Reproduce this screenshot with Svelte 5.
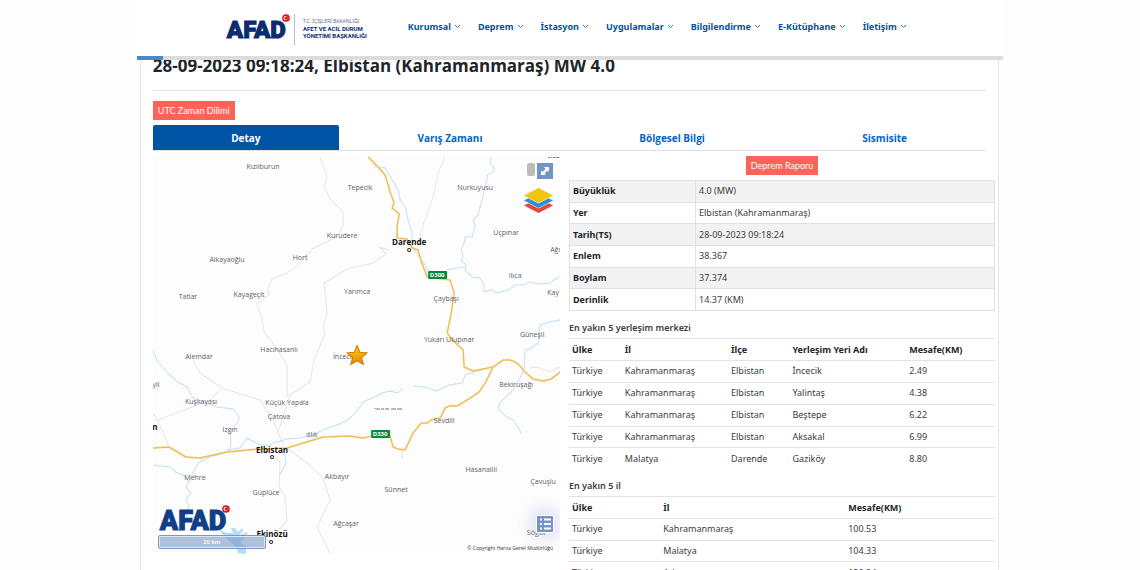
<script lang="ts">
  let activeTab = $state('Detay');

  const menu = ['Kurumsal', 'Deprem', 'İstasyon', 'Uygulamalar', 'Bilgilendirme', 'E-Kütüphane', 'İletişim'];

  const tabs = [
    { name: 'Detay', grow: 186 },
    { name: 'Varış Zamanı', grow: 222 },
    { name: 'Bölgesel Bilgi', grow: 222 },
    { name: 'Sismisite', grow: 203 }
  ];

  const details = [
    ['Büyüklük', '4.0 (MW)'],
    ['Yer', 'Elbistan (Kahramanmaraş)'],
    ['Tarih(TS)', '28-09-2023 09:18:24'],
    ['Enlem', '38.367'],
    ['Boylam', '37.374'],
    ['Derinlik', '14.37 (KM)']
  ];

  const settlements = [
    ['Türkiye', 'Kahramanmaraş', 'Elbistan', 'İncecik', '2.49'],
    ['Türkiye', 'Kahramanmaraş', 'Elbistan', 'Yalintaş', '4.38'],
    ['Türkiye', 'Kahramanmaraş', 'Elbistan', 'Beştepe', '6.22'],
    ['Türkiye', 'Kahramanmaraş', 'Elbistan', 'Aksakal', '6.99'],
    ['Türkiye', 'Malatya', 'Darende', 'Gaziköy', '8.80']
  ];

  const provinces = [
    ['Türkiye', 'Kahramanmaraş', '100.53'],
    ['Türkiye', 'Malatya', '104.33'],
    ['Türkiye', 'Adıyaman', '120.94']
  ];

  // village labels, x is the middle of the text
  const villages = [
    { name: 'Kızılburun', x: 263, y: 169 },
    { name: 'Tepecik', x: 360, y: 190 },
    { name: 'Nurkuyusu', x: 475, y: 190 },
    { name: 'Kurudere', x: 342, y: 238 },
    { name: 'Üçpınar', x: 506, y: 235 },
    { name: 'Ağı', x: 555, y: 252 },
    { name: 'Alkayaoğlu', x: 227, y: 262 },
    { name: 'Hort', x: 300, y: 260 },
    { name: 'Ilıca', x: 515, y: 278 },
    { name: 'Tatlar', x: 188, y: 299 },
    { name: 'Kayageçit', x: 249, y: 297 },
    { name: 'Yarımca', x: 357, y: 294 },
    { name: 'Çaybaşı', x: 446, y: 301 },
    { name: 'Kay', x: 553, y: 295 },
    { name: 'Yukarı Ulupınar', x: 449, y: 342 },
    { name: 'Güneşli', x: 532, y: 337 },
    { name: 'Alemdar', x: 199, y: 359 },
    { name: 'Hacıhasanlı', x: 279, y: 352 },
    { name: 'İncecik', x: 344, y: 359 },
    { name: 'yli', x: 156, y: 387 },
    { name: 'Bekiruşağı', x: 516, y: 387 },
    { name: 'Kuşkayası', x: 201, y: 404 },
    { name: 'Küçük Yapala', x: 287, y: 405 },
    { name: 'Çatova', x: 279, y: 419 },
    { name: 'Sevdili', x: 444, y: 423 },
    { name: 'Izgın', x: 230, y: 432 },
    { name: 'ıtlık', x: 312, y: 437 },
    { name: 'Mehre', x: 195, y: 480 },
    { name: 'Akbayır', x: 337, y: 479 },
    { name: 'Hasanalili', x: 481, y: 472 },
    { name: 'Çavuşlu', x: 543, y: 484 },
    { name: 'Güplüce', x: 266, y: 495 },
    { name: 'Sünnet', x: 396, y: 492 },
    { name: 'Ağcaşar', x: 346, y: 526 },
    { name: 'Söğüt', x: 536, y: 535 }
  ];

  const towns = [
    { name: 'Darende', x: 409, y: 245 },
    { name: 'Elbistan', x: 272, y: 453 },
    { name: 'Ekinözü', x: 272, y: 537 },
    { name: 'n', x: 155, y: 430 }
  ];

  const townDots = [
    [409, 250],
    [272, 457],
    [271, 542]
  ];

  const paths = [
    '320,157 327,177 324,187 330,199 343,212 343,225 337,237 312,249 297,266 287,273 272,279 267,292 270,294 257,304 262,318 264,332 275,347 284,360 287,367 287,397',
    '389,250 379,247 386,254 373,263 360,266 347,269 324,283 327,313 323,328 325,333 314,360 310,382 290,395 278,432',
    '445,157 438,173 433,197 422,228 420,236',
    '193,360 200,373 222,388 260,400 273,420 283,445 307,463 323,478 330,500 317,527 330,553',
    '158,420 210,400 221,389',
    '153,413 160,425 169,447',
    '275,457 280,462 279,487 285,497 287,520 277,532',
    '530,368 537,367 550,372 559,367',
    '402,450 402,458'
  ];

  const rivers = [
    '372,160 375,167 385,168 392,180 398,190 400,200 405,207 408,220 412,233 412,247 425,265 430,273',
    '491,157 490,163 494,168 493,172 487,175 487,179 485,186 482,200 480,207 478,215 473,220 475,226 472,237 465,237 464,243 461,250 463,256 461,261 466,265 465,270 472,277 480,278 484,285 484,292 490,290 498,293 510,289 515,285 523,285 530,282 538,284 550,283 554,280 559,277',
    '447,270 457,268 465,267',
    '560,320 549,322 540,325 539,330 538,343 530,349 525,350 524,370 513,390 500,402 498,408 504,415 513,420 521,433',
    '413,386 424,387 437,391 449,385 462,383 465,375 478,371 493,367',
    '403,388 398,393 390,391 382,393 375,397 370,399 363,402 360,407 355,413 346,421 337,425 325,429 313,435 300,438 287,439 273,443 270,445 260,445 247,438 240,448 227,450',
    '153,350 157,361 167,372 178,382 187,387 193,398 205,403 217,407 233,409 238,415 239,420 234,427 230,433 231,441 230,450 221,454 210,457 198,463 192,475 190,480 186,487 191,493 186,500 189,507 185,513 189,520',
    '153,465 170,467 177,473 183,475 189,482',
    '280,450 285,456 286,463 280,475'
  ];

  const roads = [
    '368,157 377,166 385,175 390,192 394,203 392,208 399,214 397,227 397,238 407,239 412,248 418,250 421,261 427,277 450,280 454,293 451,314 447,333 453,341 463,350 464,367 473,371 493,367',
    '153,448 169,447 186,457 200,458 227,452 257,449 287,448 323,437 350,436 363,438 372,436 390,436 393,447 398,449 405,450 413,433 421,423 427,423 431,420 440,418 445,408 449,406 457,406 470,398 479,392 485,383 493,367 503,360 510,360 517,363 525,372 533,379 543,381 551,379 560,372'
  ];
</script>

{#snippet crescent()}
  <svg class="flag" viewBox="0 0 10 10" aria-hidden="true">
    <circle cx="5" cy="5" r="4.8" fill="#e3121c" />
    <circle cx="4.4" cy="5" r="2.4" fill="#fff" />
    <circle cx="5.2" cy="5" r="1.9" fill="#e3121c" />
    <path d="M7.8 4 7.5 4.8 6.7 5 7.5 5.3 7.8 6.1 7.9 5.2z" fill="#fff" />
  </svg>
{/snippet}

<div class="page">
  <header>
    <div class="topBar">
      <a class="brand" href="#anasayfa">
        <span class="afad">AFAD{@render crescent()}</span>
        <span class="ministry">
          <small>T.C. İÇİŞLERİ BAKANLIĞI</small>
          <span>AFET VE ACİL DURUM</span>
          <span>YÖNETİMİ BAŞKANLIĞI</span>
        </span>
      </a>
      <nav>
        {#each menu as item}
          <a href="#menu">
            {item}
            <svg viewBox="0 0 7 5" aria-hidden="true"><path d="M1 1l2.5 2.5L6 1" /></svg>
          </a>
        {/each}
      </nav>
    </div>
    <div class="scrollTrack"><div class="scrollBar"></div></div>
  </header>

  <main>
    <h1>28-09-2023 09:18:24, Elbistan (Kahramanmaraş) MW 4.0</h1>
    <button class="danger">UTC Zaman Dilimi</button>

    <div class="tabs" role="tablist">
      {#each tabs as tab}
        <button
          role="tab"
          aria-selected={activeTab === tab.name}
          class:active={activeTab === tab.name}
          style="flex-grow: {tab.grow}"
          onclick={() => (activeTab = tab.name)}>{tab.name}</button
        >
      {/each}
    </div>

    <div class="columns">
      <section class="map">
        <svg class="tiles" viewBox="153 156 407 398" preserveAspectRatio="xMidYMid slice">
          {#each paths as points}
            <polyline class="path" {points} />
          {/each}
          {#each rivers as points}
            <polyline class="river" {points} />
          {/each}
          <path
            class="lake"
            d="M218 529l9 4 6 0-2-5 4 0 3 4 4-4 1 3-4 4 9-3-5 8-4 2 7 4 0 8-8-1-2-6-8-7-5-5z"
          />
          {#each roads as points}
            <polyline class="roadEdge" {points} />
            <polyline class="road" {points} />
          {/each}

          {#each villages as village}
            <text class="village" x={village.x} y={village.y}>{village.name}</text>
          {/each}
          {#each towns as town}
            <text class="town" x={town.x} y={town.y}>{town.name}</text>
          {/each}
          {#each townDots as [x, y]}
            <circle class="dot" cx={x} cy={y} r="1.5" />
          {/each}

          <rect class="shield" x="428" y="271" width="19" height="8" rx="1" />
          <text class="route" x="437" y="277">D300</text>
          <rect class="shield" x="371" y="430" width="19" height="8" rx="1" />
          <text class="route" x="380" y="436">D330</text>

          <!-- labels cut by the tile edges -->
          <path class="cut" d="M548 157.500h2m1 0h1m1 0h2m1 0h3M375 408v1m1 0h4m1 0h3m1 0h4m2 0h5m1 0h5" />

          <defs>
            <linearGradient id="gold" x1="0" y1="0" x2="0" y2="1">
              <stop offset="0" stop-color="#ffcb1c" />
              <stop offset="1" stop-color="#e38700" />
            </linearGradient>
          </defs>
          <path
            class="star"
            fill="url(#gold)"
            d="M357 345.500l2.800 6.700 7.200.6-5.500 4.700 1.800 7-6.300-3.800-6.300 3.800 1.800-7-5.500-4.700 7.200-.6z"
          />
        </svg>

        <div class="mapTools">
          <span class="handle"></span>
          <button class="expand" aria-label="Tam ekran">
            <svg viewBox="0 0 16 16"><path d="M12 4v5L10.500 7.500 7.500 10.500 9 12H4V7.500L5.500 9 8.500 6 7 4z" /></svg>
          </button>
          <button class="layers" aria-label="Katmanlar">
            <svg viewBox="0 0 29 26">
              <path fill="#e8483c" d="M14.500 10 29 17.500 14.500 25 0 17.500z" />
              <path fill="#fff" d="M14.500 5.500 29 13 14.500 20.500 0 13z" />
              <path fill="#2f8fd8" d="M14.500 5 29 12.500 14.500 20 0 12.500z" />
              <path fill="#fff" d="M14.500 0 29 8 14.500 15.500 0 8z" />
              <path fill="#f1c40f" d="M14.500 0 29 7.500 14.500 15 0 7.500z" />
            </svg>
          </button>
        </div>

        <div class="mapLogo">
          <span class="afad">AFAD{@render crescent()}</span>
          <div class="scale">20 km</div>
        </div>

        <div class="legend">
          <button aria-label="Lejant">
            <svg viewBox="0 0 16 16">
              <path d="M3 3.500h2M3 8h2M3 12.500h2M7 3.500h7M7 8h7M7 12.500h7" />
            </svg>
          </button>
          <small>© Copyright Harita Genel Müdürlüğü</small>
        </div>
      </section>

      <section class="info">
        <button class="danger report">Deprem Raporu</button>

        <table class="details">
          <tbody>
            {#each details as [label, value]}
              <tr>
                <th scope="row">{label}</th>
                <td>{value}</td>
              </tr>
            {/each}
          </tbody>
        </table>

        <h2>En yakın 5 yerleşim merkezi</h2>
        <table class="list settlements">
          <thead>
            <tr>
              <th>Ülke</th>
              <th>İl</th>
              <th>İlçe</th>
              <th>Yerleşim Yeri Adı</th>
              <th>Mesafe(KM)</th>
            </tr>
          </thead>
          <tbody>
            {#each settlements as row}
              <tr>
                {#each row as cell}<td>{cell}</td>{/each}
              </tr>
            {/each}
          </tbody>
        </table>

        <h2>En yakın 5 il</h2>
        <table class="list provinces">
          <thead>
            <tr>
              <th>Ülke</th>
              <th>İl</th>
              <th>Mesafe(KM)</th>
            </tr>
          </thead>
          <tbody>
            {#each provinces as row}
              <tr>
                {#each row as cell}<td>{cell}</td>{/each}
              </tr>
            {/each}
          </tbody>
        </table>
      </section>
    </div>
  </main>
</div>

<style>
  :global(body) {
    background: #fefefe;
  }

  .page {
    width: 76%;
    height: 100vh;
    margin: 0 auto;
    overflow: hidden;
    font-family: 'Open Sans', 'Noto Sans', sans-serif;
    font-size: 10px;
    color: #3a3d40;
  }

  button {
    font: inherit;
    border: none;
    padding: 0;
    cursor: pointer;
  }

  a {
    text-decoration: none;
  }

  header {
    position: relative;
    z-index: 1;
    background: white;
  }

  .topBar {
    display: flex;
    align-items: center;
    height: 53px;
    padding: 0 0 3px 90px;
  }

  .brand {
    display: flex;
    align-items: center;
    width: 181px;
    padding-top: 6px;
    color: #0b2c6f;
  }

  .afad {
    position: relative;
    font-family: Roboto, sans-serif;
    font-size: 24px;
    line-height: 24px;
    font-weight: 900;
    color: #0b2c6f;
    -webkit-text-stroke: 1px currentColor;
  }

  .flag {
    position: absolute;
    top: -4px;
    right: -4px;
    width: 8px;
    height: 8px;
  }

  .ministry {
    display: flex;
    flex-direction: column;
    margin-left: 8px;
    padding: 4px 0 6px 8px;
    border-left: 1px solid #b8bfd0;
    font-family: Roboto, sans-serif;
    font-size: 6px;
    line-height: 7px;
    font-weight: 700;
    white-space: nowrap;
  }

  .ministry small {
    font-family: 'Noto Sans', sans-serif;
    font-size: 5px;
    font-weight: 400;
    color: #5d6c95;
  }

  nav {
    display: flex;
    gap: 17px;
    font-family: 'Noto Sans', sans-serif;
    font-size: 9px;
    white-space: nowrap;
  }

  nav a {
    display: flex;
    align-items: center;
    gap: 3px;
    color: #0054a6;
    font-weight: 700;
  }

  nav svg {
    width: 7px;
    height: 5px;
    fill: none;
    stroke: #3c78b8;
  }

  .scrollTrack {
    height: 4px;
    background: #dcdcdc;
  }

  .scrollBar {
    width: 3%;
    height: 4px;
    background: #4a89c8;
  }

  main {
    margin: 0 4px 0 3px;
    padding: 0 3px 0 12px;
    border: 1px solid #e4e5ec;
    border-width: 0 1px;
    background: white;
  }

  h1 {
    margin: -6px 9px 10px 0;
    padding-bottom: 12px;
    border-bottom: 1px solid #e3e4e6;
    font-size: 17px;
    line-height: 24px;
    font-weight: 700;
    color: #212529;
    white-space: nowrap;
  }

  .danger {
    height: 19px;
    padding: 0 5px;
    background: #ff6258;
    color: white;
    font-family: Lato, sans-serif;
    font-size: 9px;
  }

  main > .danger {
    display: block;
  }

  .tabs {
    display: flex;
    margin: 5px 9px 5px 0;
    border-bottom: 1px solid #dee2e6;
  }

  .tabs button {
    flex-basis: 0;
    height: 25px;
    background: transparent;
    color: #0066c8;
    font-weight: 700;
  }

  .tabs .active {
    background: #0054a6;
    border-radius: 2px 2px 0 0;
    color: white;
  }

  .columns {
    display: grid;
    grid-template-columns: 407fr 426fr;
    gap: 9px;
    align-items: start;
  }

  .map {
    position: relative;
    height: 398px;
    overflow: hidden;
    background: #fdfdfd;
  }

  .tiles {
    display: block;
    width: 100%;
    height: 100%;
  }

  .path,
  .river,
  .road,
  .roadEdge {
    fill: none;
    stroke-linejoin: round;
  }

  .path {
    stroke: #e6e6e6;
  }

  .river {
    stroke: #c3e0f5;
  }

  .lake {
    fill: #b5dcf7;
  }

  .roadEdge {
    stroke: #f6dfa8;
    stroke-width: 2;
  }

  .road {
    stroke: #edb84e;
    stroke-width: 1;
  }

  .village,
  .town,
  .route {
    text-anchor: middle;
    font-size: 7px;
  }

  .village {
    fill: #5e5e68;
  }

  .town {
    font-size: 8px;
    font-weight: 700;
    fill: #111;
  }

  .route {
    font-size: 6px;
    font-weight: 700;
    fill: white;
  }

  .dot {
    fill: white;
    stroke: #222;
  }

  .shield {
    fill: #078a3c;
  }

  .cut {
    stroke: #777;
  }

  .star {
    stroke: #c87c08;
  }

  .mapTools {
    position: absolute;
    top: 7px;
    right: 7px;
    display: flex;
    flex-wrap: wrap;
    justify-content: flex-end;
    gap: 9px 2px;
    width: 30px;
  }

  .handle {
    width: 8px;
    height: 13px;
    border-radius: 2px;
    background: #bcbcbc;
  }

  .expand,
  .legend button {
    width: 16px;
    height: 16px;
    background: #7394c4;
  }

  .expand svg,
  .layers svg,
  .legend svg {
    display: block;
  }

  .expand path {
    fill: white;
  }

  .layers {
    width: 29px;
    height: 26px;
    background: transparent;
  }

  .mapLogo {
    position: absolute;
    left: 5px;
    bottom: 5px;
    width: 108px;
  }

  .mapLogo .afad {
    display: inline-block;
    margin-left: 2px;
    font-size: 27px;
    color: #0f3f87;
  }

  .scale {
    margin-top: 2px;
    border: 1px solid #7b98c4;
    outline: 1px solid #dfe6f1;
    outline-offset: -2px;
    border-radius: 2px;
    background: #7b98c499;
    color: white;
    font-size: 6px;
    line-height: 12px;
    font-weight: 600;
    text-align: center;
  }

  .legend {
    position: absolute;
    right: 7px;
    bottom: 2px;
    display: flex;
    flex-direction: column;
    align-items: flex-end;
    gap: 12px;
    line-height: 8px;
  }

  .legend button {
    box-shadow: 0 0 0 1px white, 0 0 16px 6px #b4bae066;
  }

  .legend path {
    stroke: white;
    stroke-width: 2;
  }

  .legend small {
    font-size: 5px;
    color: #333;
  }

  .info {
    display: flex;
    flex-direction: column;
  }

  .report {
    align-self: center;
    margin-bottom: 5px;
  }

  table {
    width: 100%;
    border-collapse: collapse;
    table-layout: fixed;
    font-family: 'Noto Sans', sans-serif;
    font-size: 9px;
    line-height: 14px;
  }

  th,
  td {
    padding: 0 3px;
    text-align: left;
    white-space: nowrap;
  }

  th {
    color: #212529;
    font-weight: 700;
  }

  .details,
  .settlements {
    height: 131px;
  }

  .provinces {
    height: 87px;
  }

  thead tr {
    height: 22px;
  }

  .details th,
  .details td {
    border: 1px solid #dee2e6;
  }

  .details th {
    width: 28%;
  }

  .details tr:nth-child(odd) {
    background: #f2f2f2;
  }

  h2 {
    margin: 10px 0 3px;
    font-family: 'Noto Sans', sans-serif;
    font-size: 9px;
    line-height: 14px;
    font-weight: 600;
    color: #3a3d40;
  }

  .list th,
  .list td {
    border-top: 1px solid #e1e4e7;
  }

  .settlements th:nth-child(1) {
    width: 11%;
  }

  .settlements th:nth-child(2) {
    width: 23.500%;
  }

  .settlements th:nth-child(3) {
    width: 13%;
  }

  .settlements th:nth-child(4) {
    width: 26%;
  }

  .provinces th:nth-child(1) {
    width: 20%;
  }

  .provinces th:nth-child(2) {
    width: 42%;
  }
</style>
